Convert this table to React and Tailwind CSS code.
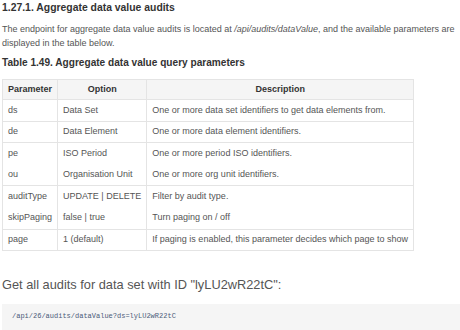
const ROWS = [
  { group: [["ds", "Data Set", "One or more data set identifiers to get data elements from."]] },
  { group: [["de", "Data Element", "One or more data element identifiers."]] },
  {
    group: [
      ["pe", "ISO Period", "One or more period ISO identifiers."],
      ["ou", "Organisation Unit", "One or more org unit identifiers."],
    ],
  },
  {
    group: [
      ["auditType", "UPDATE | DELETE", "Filter by audit type."],
      ["skipPaging", "false | true", "Turn paging on / off"],
    ],
  },
  { group: [["page", "1 (default)", "If paging is enabled, this parameter decides which page to show"]] },
]

export default function App() {
  return (
    <div className="h-[330px] w-[460px] overflow-hidden bg-white pl-[2px] font-['Liberation_Sans',Arial,sans-serif] text-[#555]">
      <h3 className="text-[10.4px] leading-[16px] font-bold text-[#333]">1.27.1. Aggregate data value audits</h3>
      <p className="mt-[6px] text-[9px] leading-[14px]">
        The endpoint for aggregate data value audits is located at <em>/api/audits/dataValue</em>, and the available parameters are displayed in the table below.
      </p>
      <p className="mt-[6px] text-[10.1px] leading-[14px] font-bold text-[#333]">Table 1.49. Aggregate data value query parameters</p>

      <table className="mt-[9px] w-[412px] border-collapse text-[9px]">
        <thead>
          <tr className="h-[20px] bg-[#f5f5f5] text-[#333]">
            <th className="w-[55px] border border-[#e4e4e4] px-[5px] text-left font-bold">Parameter</th>
            <th className="w-[90px] border border-[#e4e4e4] px-[5px] text-center font-bold">Option</th>
            <th className="border border-[#e4e4e4] px-[5px] text-center font-bold">Description</th>
          </tr>
        </thead>
        {ROWS.map((row, i) => (
          <tbody key={i} className="border border-[#e4e4e4]">
            {row.group.map(([param, option, desc]) => (
              <tr key={param} className="h-[21.6px]">
                <td className="border-r border-[#e4e4e4] px-[5px] whitespace-nowrap">{param}</td>
                <td className="border-r border-[#e4e4e4] px-[5px] whitespace-nowrap">{option}</td>
                <td className="px-[5px] whitespace-nowrap">{desc}</td>
              </tr>
            ))}
          </tbody>
        ))}
      </table>

      <p className="mt-[26px] text-[12.8px] leading-[16px]">Get all audits for data set with ID "lyLU2wR22tC":</p>
      <pre className="mt-[11px] h-[40px] bg-[#f5f5f5] px-[10px] pt-[7px] font-['Liberation_Mono',monospace] text-[7px] leading-[10px] text-[#4a5a78]">
        /api/26/audits/dataValue?ds=lyLU2wR22tC
      </pre>
    </div>
  )
}
